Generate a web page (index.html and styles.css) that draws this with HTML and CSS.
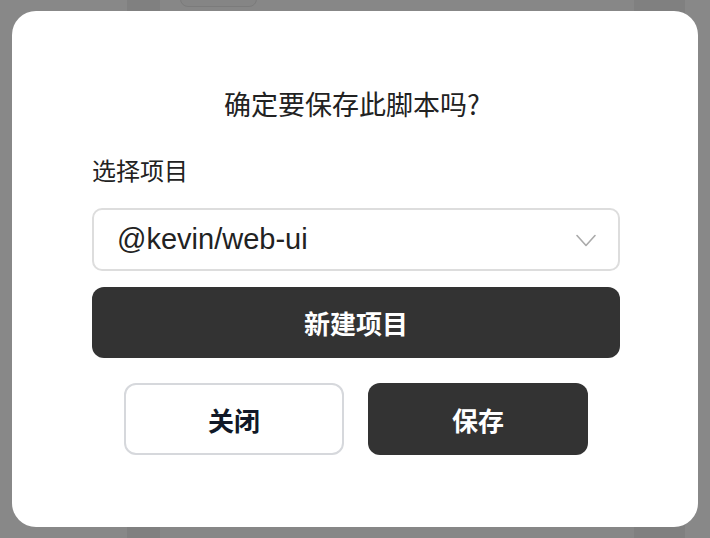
FILE: index.html
```html
<!DOCTYPE html>
<html lang="zh-CN">
<head>
<meta charset="utf-8">
<title>保存脚本</title>
<link rel="stylesheet" href="styles.css">
</head>
<body>
<div class="backdrop">
  <div class="col col-a"></div>
  <div class="col col-b"></div>
  <div class="col col-c"><div class="ghost-btn"></div></div>
  <div class="col col-d"></div>
  <div class="col col-e"></div>
</div>
<div class="overlay">
  <div class="modal">
    <h1 class="title">确定要保存此脚本吗?</h1>
    <div class="field">
      <label class="label">选择项目</label>
      <div class="select">
        <span class="select-value">@kevin/web-ui</span>
        <svg class="chevron" width="20" height="13" viewBox="0 0 20 13"><path d="M1 1.5 L10 11.5 L19 1.5" fill="none" stroke="#aaaaaa" stroke-width="1.6" stroke-linecap="round" stroke-linejoin="round"/></svg>
      </div>
      <button class="btn btn-dark btn-wide">新建项目</button>
    </div>
    <div class="actions">
      <button class="btn btn-light">关闭</button>
      <button class="btn btn-dark">保存</button>
    </div>
  </div>
</div>
</body>
</html>
```
FILE: styles.css
```css
html, body {
  margin: 0;
  padding: 0;
  height: 100%;
}
body {
  background: #888888;
  font-family: "Liberation Sans", "Noto Sans CJK SC", sans-serif;
  overflow: hidden;
}
.backdrop {
  display: grid;
  grid-template-columns: 127px 33px 474px 51px 1fr;
  height: 100%;
}
.col-a { background: #888888; }
.col-b { background: #808080; }
.col-c { background: #878787; padding-left: 20px; }
.col-d { background: #808080; }
.col-e { background: #888888; }
.ghost-btn {
  width: 75px;
  height: 20px;
  margin-top: -15px;
  border: 1px solid #7b7b7b;
  border-radius: 8px;
  background: #858585;
}
.overlay {
  position: fixed;
  inset: 0;
  display: flex;
}
.modal {
  margin: 11px 12px;
  flex: 1;
  height: 516px;
  background: #ffffff;
  border-radius: 24px;
  box-sizing: border-box;
  padding: 74px 78px 0 80px;
  display: flex;
  flex-direction: column;
}
.title {
  margin: 0;
  padding-right: 8px;
  font-family: "Noto Sans CJK SC", sans-serif;
  font-size: 27px;
  line-height: 37px;
  font-weight: 400;
  color: #222222;
  text-align: center;
}
.field {
  margin-top: 32px;
  display: flex;
  flex-direction: column;
}
.label {
  font-family: "Noto Sans CJK SC", sans-serif;
  font-size: 24px;
  line-height: 32px;
  color: #222222;
}
.select {
  margin-top: 22px;
  height: 63px;
  box-sizing: border-box;
  border: 2px solid #dddddd;
  border-radius: 10px;
  display: flex;
  align-items: center;
  justify-content: space-between;
  padding: 0 22px 0 23px;
}
.select-value {
  font-family: "Liberation Sans", sans-serif;
  font-size: 29px;
  color: #222222;
}
.chevron {
  display: block;
  margin-top: 2px;
}
.btn {
  font-family: "Noto Sans CJK SC", sans-serif;
  font-weight: 700;
  font-size: 26px;
  border-radius: 12px;
  box-sizing: border-box;
  cursor: pointer;
}
.btn-dark {
  background: #333333;
  color: #ffffff;
  border: none;
}
.btn-wide {
  margin-top: 16px;
  height: 71px;
}
.actions {
  margin-top: 25px;
  display: flex;
  justify-content: center;
  gap: 24px;
}
.actions .btn {
  width: 220px;
  height: 72px;
}
.btn-light {
  background: #ffffff;
  color: #111827;
  border: 2px solid #d6d8dc;
}
```
